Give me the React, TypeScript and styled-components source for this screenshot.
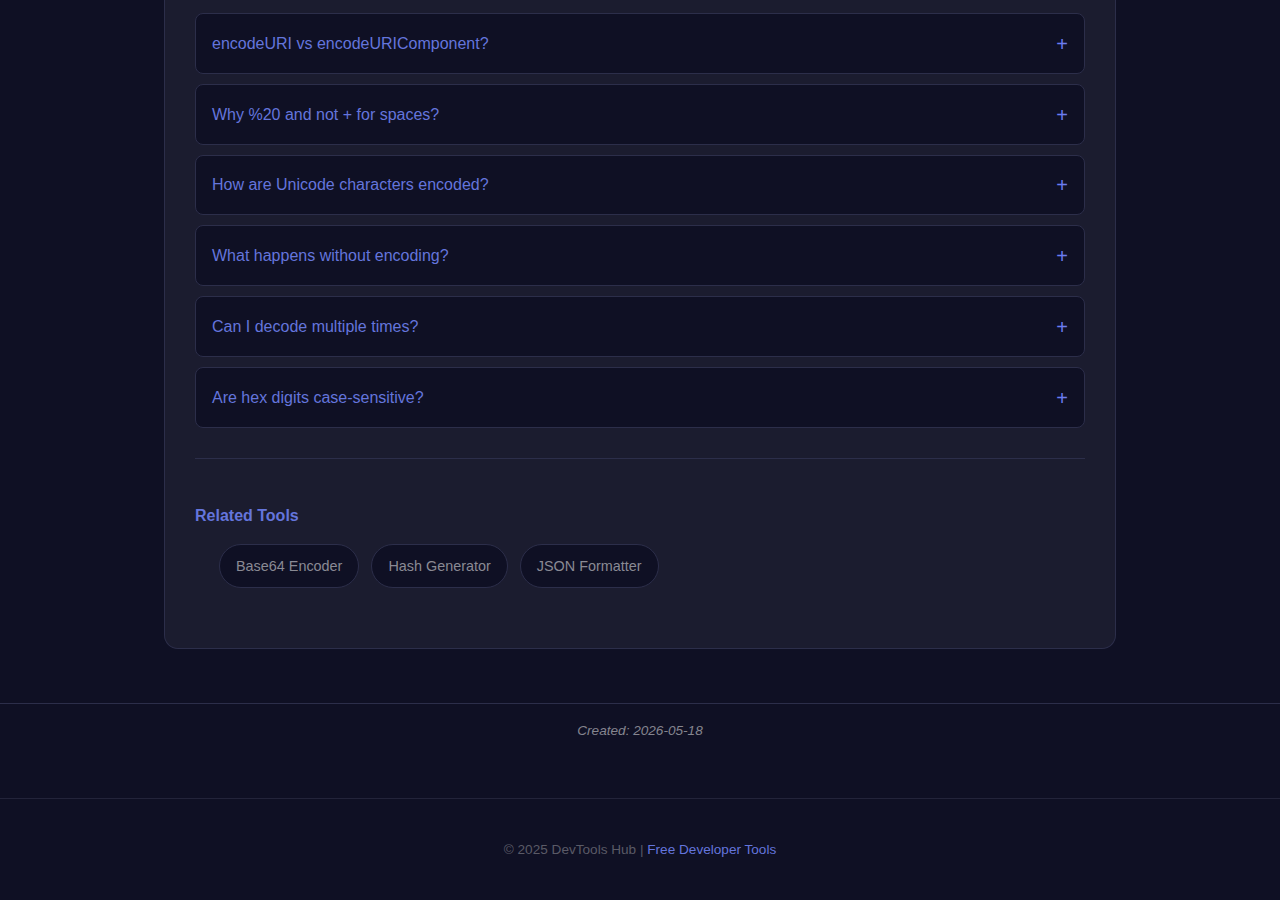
import React from "react";
import styled, { createGlobalStyle } from "styled-components";

const Global = createGlobalStyle`
  html, body { margin: 0; padding: 0; background: #0f1024; }
  body { font-family: "Liberation Sans", Arial, sans-serif; color: #c9cbe0; }
  * { box-sizing: border-box; }
`;

const Page = styled.div`
  min-height: 900px;
  background: #0f1024;
  display: flex;
  flex-direction: column;
`;

const Card = styled.section`
  width: 952px;
  margin: 0 auto;
  background: #1b1c2f;
  border: 1px solid #2c2e4a;
  border-top: 0;
  border-radius: 0 0 14px 14px;
  padding: 13px 30px 60px;
`;

const FaqList = styled.div`
  display: flex;
  flex-direction: column;
  gap: 10px;
`;

const FaqItem = styled.div`
  background: #0f1024;
  border: 1px solid #2c2e4a;
  border-radius: 8px;
  height: 60.8px;
  padding: 1px 16px 0;
  display: flex;
  align-items: center;
  justify-content: space-between;
  cursor: pointer;
`;

const Question = styled.span`
  font-size: 16px;
  color: #6475dc;
`;

const Plus = styled.span`
  font-size: 20px;
  color: #6b7cf0;
  line-height: 1;
`;

const Divider = styled.hr`
  border: 0;
  border-top: 1px solid #2c2e4a;
  margin: 30px 0 0;
`;

const Related = styled.div`
  margin-top: 48px;
`;

const RelatedTitle = styled.h3`
  margin: 0;
  font-size: 16px;
  font-weight: 700;
  color: #6475dc;
`;

const Chips = styled.div`
  display: flex;
  gap: 12px;
  padding-left: 24px;
  margin-top: 19px;
`;

const Chip = styled.a`
  display: inline-flex;
  align-items: center;
  height: 44px;
  padding: 1px 16px 0;
  background: #0f1024;
  border: 1px solid #2c2e4a;
  border-radius: 22px;
  font-size: 14.4px;
  color: #8a8a94;
  text-decoration: none;
`;

const Meta = styled.div`
  margin-top: 54px;
  border-top: 1px solid #2c2e4a;
  height: 95px;
  padding-top: 19px;
  text-align: center;
  font-size: 13.6px;
  font-style: italic;
  color: #85858f;
`;

const Footer = styled.footer`
  border-top: 1px solid #23243a;
  padding-top: 43px;
  text-align: center;
  font-size: 13.6px;
  color: #5a5a66;
`;

const FooterLink = styled.a`
  color: #6475dc;
  text-decoration: none;
`;

const questions = [
  "encodeURI vs encodeURIComponent?",
  "Why %20 and not + for spaces?",
  "How are Unicode characters encoded?",
  "What happens without encoding?",
  "Can I decode multiple times?",
  "Are hex digits case-sensitive?",
];

const tools = ["Base64 Encoder", "Hash Generator", "JSON Formatter"];

export default function App() {
  return (
    <Page>
      <Global />
      <Card>
        <FaqList>
          {questions.map((q) => (
            <FaqItem key={q}>
              <Question>{q}</Question>
              <Plus>+</Plus>
            </FaqItem>
          ))}
        </FaqList>
        <Divider />
        <Related>
          <RelatedTitle>Related Tools</RelatedTitle>
          <Chips>
            {tools.map((t) => (
              <Chip key={t} href="#">
                {t}
              </Chip>
            ))}
          </Chips>
        </Related>
      </Card>
      <Meta>Created: 2026-05-18</Meta>
      <Footer>
        © 2025 DevTools Hub | <FooterLink href="#">Free Developer Tools</FooterLink>
      </Footer>
    </Page>
  );
}
